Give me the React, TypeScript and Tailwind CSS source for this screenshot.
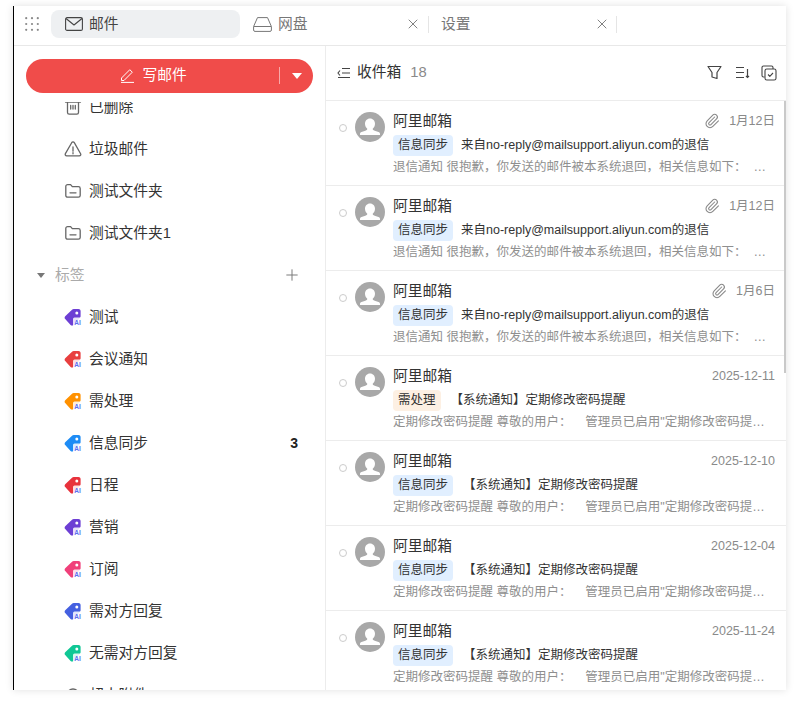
import React from "react";
import { X, Plus, Paperclip } from "lucide-react";

const font = { fontFamily: '"Liberation Sans","Noto Sans CJK SC",sans-serif' };

function TagIcon({ color }: { color: string }) {
  return (
    <svg width="18" height="18" viewBox="0 0 18 18" className="shrink-0">
      <path d="M1.2 8.2 8.3 1.6c.4-.4.9-.6 1.4-.6h4.8c1.2 0 2.1.9 2.1 2.1v5.2c0 .5-.2 1-.6 1.4l-6.6 7.2c-.8.8-2 .8-2.8 0L1.2 11c-.8-.8-.8-2 0-2.8Z" fill={color} />
      <circle cx="12.8" cy="5" r="1.5" fill="#fff" />
      <rect x="9" y="9.5" width="9" height="8.5" rx="1.5" fill="#fff" fillOpacity="0.85" />
      <text x="13.5" y="16.5" textAnchor="middle" fontSize="6.5" fontWeight="700" fill="#5b6ff0" fontFamily="Liberation Sans">AI</text>
    </svg>
  );
}

function FolderIcon() {
  return (
    <svg width="18" height="18" viewBox="0 0 18 18" fill="none" stroke="#666" strokeWidth="1.3" strokeLinejoin="round" strokeLinecap="round" className="shrink-0">
      <path d="M1.8 4.4c0-1 .8-1.8 1.8-1.8h3l1.700 2h6.100c1 0 1.800.8 1.800 1.800v7c0 1-.8 1.800-1.800 1.800H3.600c-1 0-1.800-.8-1.800-1.800v-9Z" />
      <path d="M6 10.800h6" />
    </svg>
  );
}

function WarnIcon() {
  return (
    <svg width="18" height="18" viewBox="0 0 18 18" fill="none" stroke="#666" strokeWidth="1.3" strokeLinejoin="round" className="shrink-0">
      <path d="M7.700 2.700c.6-1 2-1 2.600 0l6.300 11c.6 1-.1 2.200-1.300 2.200H2.700c-1.200 0-1.900-1.200-1.300-2.200l6.300-11Z" />
      <path d="M9 6.800v4.400M9 12.600v1.200" strokeLinecap="round" />
    </svg>
  );
}

function TrashIcon() {
  return (
    <svg width="18" height="18" viewBox="0 0 18 18" fill="none" stroke="#666" strokeWidth="1.3" strokeLinecap="round" className="shrink-0">
      <path d="M3.500 4v10.500c0 1 .7 1.700 1.700 1.700h7.600c1 0 1.700-.7 1.700-1.700V4M1.500 4h15M6.700 7.500V11M9 7.500V11M11.300 7.500V11M6.500 4V2h5v2" />
    </svg>
  );
}

function ClipLargeIcon() {
  return (
    <svg width="18" height="18" viewBox="0 0 18 18" fill="none" stroke="#666" strokeWidth="1.3" className="shrink-0">
      <path d="M3 9a6 6 0 0 1 12 0v7" />
    </svg>
  );
}

function Item({ icon, label, badge }: { icon: React.ReactNode; label: string; badge?: string }) {
  return (
    <div className="h-[42px] flex items-center pl-[50px] pr-[27px] shrink-0">
      <span className="w-[18px] h-[18px] flex items-center justify-center">{icon}</span>
      <span className="ml-[7px] text-[14.75px] text-[#333] flex-1">{label}</span>
      {badge && <span className="text-[14px] font-bold text-[#222]">{badge}</span>}
    </div>
  );
}

const tags: [string, string, string?][] = [
  ["测试", "#6d3fd4"],
  ["会议通知", "#e83f3f"],
  ["需处理", "#ff9100"],
  ["信息同步", "#1e8cf5", "3"],
  ["日程", "#e8323c"],
  ["营销", "#6d3fd4"],
  ["订阅", "#f0407a"],
  ["需对方回复", "#4560e0"],
  ["无需对方回复", "#10c795"],
];

type Mail = { tag: string; subject: string; date: string; clip?: boolean; kind: "a" | "b" };
const mails: Mail[] = [
  { tag: "信息同步", subject: "来自no-reply@mailsupport.aliyun.com的退信", date: "1月12日", clip: true, kind: "a" },
  { tag: "信息同步", subject: "来自no-reply@mailsupport.aliyun.com的退信", date: "1月12日", clip: true, kind: "a" },
  { tag: "信息同步", subject: "来自no-reply@mailsupport.aliyun.com的退信", date: "1月6日", clip: true, kind: "a" },
  { tag: "需处理", subject: "【系统通知】定期修改密码提醒", date: "2025-12-11", kind: "b" },
  { tag: "信息同步", subject: "【系统通知】定期修改密码提醒", date: "2025-12-10", kind: "b" },
  { tag: "信息同步", subject: "【系统通知】定期修改密码提醒", date: "2025-12-04", kind: "b" },
  { tag: "信息同步", subject: "【系统通知】定期修改密码提醒", date: "2025-11-24", kind: "b" },
];

function Avatar() {
  return (
    <svg width="30" height="30" viewBox="0 0 30 30" className="shrink-0">
      <circle cx="15" cy="15" r="15" fill="#a8a8a8" />
      <path d="M15 6.500c3 0 5 2.300 5 5.200 0 2.200-1 4-2.300 5 0 1 .6 1.500 2 2l3.800 1.400c.9.3 1.500 1 1.500 2V23H5v-1c0-.9.6-1.600 1.500-1.900l3.800-1.400c1.400-.5 2-1 2-2-1.300-1-2.300-2.800-2.300-5 0-2.900 2-5.200 5-5.200Z" fill="#fff" />
    </svg>
  );
}

function Row({ m }: { m: Mail }) {
  const isProc = m.tag === "需处理";
  return (
    <div className="h-[85px] shrink-0 border-b border-[#ececec] flex pl-[13px] pr-[11px]">
      <span className="mt-[23px] w-[8px] h-[8px] rounded-full border border-[#ccc] shrink-0" />
      <div className="ml-[8px] mt-[11px]"><Avatar /></div>
      <div className="ml-[8px] flex-1 min-w-0">
        <div className="h-[20px] mt-[10px] flex items-center">
          <span className="text-[14.75px] text-[#333] flex-1">阿里邮箱</span>
          {m.clip && <Paperclip size={16} strokeWidth={1.6} className="text-[#888] mr-[9px]" />}
          <span className="text-[12.5px] text-[#8a8a8a]">{m.date}</span>
        </div>
        <div className="h-[21px] mt-[4px] flex items-center">
          <span className={`h-[21px] px-[5px] rounded-[4px] text-[12.5px] text-[#333] flex items-center ${isProc ? "bg-[#fdf0e3]" : "bg-[#e1efff]"}`}>{m.tag}</span>
          <span className={`text-[12.5px] text-[#333] whitespace-nowrap ${m.kind === "a" ? "ml-[8px]" : "ml-[10px]"}`}>{m.subject}</span>
        </div>
        <div className="mt-[2px] mr-[8px] text-[12.5px] leading-[18px] text-[#8f8f8f] overflow-hidden flex">
          {m.kind === "a" ? (
            <span className="whitespace-pre truncate">{"退信通知 很抱歉，你发送的邮件被本系统退回，相关信息如下：  …"}</span>
          ) : (
            <span className="whitespace-pre truncate">{"定期修改密码提醒 尊敬的用户：    管理员已启用\"定期修改密码提醒\"功能，请及时修改"}</span>
          )}
        </div>
      </div>
    </div>
  );
}

export default function App() {
  return (
    <div className="w-[803px] h-[709px] bg-white pt-[6px] pl-[13px] overflow-hidden" style={font}>
      <div className="w-[773px] h-[684px] border-l border-black bg-white flex flex-col shadow-[0_0_8px_rgba(0,0,0,0.12)] overflow-hidden">
        <div className="h-[40px] shrink-0 border-b border-[#e8e8e8] flex items-center pb-[3px]">
          <svg width="14" height="14" viewBox="0 0 14 14" fill="#888" className="ml-[11px] shrink-0">
            {[1.2, 7, 12.8].flatMap((y) => [1.2, 7, 12.8].map((x) => <circle key={`${x}-${y}`} cx={x} cy={y} r="1.1" />))}
          </svg>
          <div className="ml-[12px] w-[189px] h-[28px] rounded-lg bg-[#eef0f2] flex items-center pl-[14px] shrink-0">
            <svg width="18" height="14" viewBox="0 0 18 14" fill="none" stroke="#444" strokeWidth="1.1" strokeLinejoin="round">
              <rect x="0.6" y="0.6" width="16.8" height="12.8" rx="1.5" />
              <path d="m1 1.500 8 6.500 8-6.500" />
            </svg>
            <span className="ml-[6px] text-[14.75px] text-[#444]">邮件</span>
          </div>
          <div className="w-[189px] h-[17px] border-r border-[#e5e5e5] flex items-center pl-[13px] pr-[7px] shrink-0">
            <svg width="19" height="15" viewBox="0 0 19 15" fill="none" stroke="#777" strokeWidth="1" strokeLinejoin="round">
              <path d="M4.500 0.600h10L18.400 9.500V13a1.400 1.400 0 0 1-1.400 1.400H2A1.400 1.400 0 0 1 0.600 13V9.500L4.500 0.600Z" />
              <path d="M0.800 9.500h17.400" />
            </svg>
            <span className="ml-[6px] text-[14.75px] text-[#777] flex-1">网盘</span>
            <X size={16} strokeWidth={1.4} className="text-[#777]" />
          </div>
          <div className="w-[188px] h-[17px] border-r border-[#e5e5e5] flex items-center pl-[12px] pr-[6px] shrink-0">
            <span className="text-[14.75px] text-[#777] flex-1">设置</span>
            <X size={16} strokeWidth={1.4} className="text-[#777]" />
          </div>
        </div>
        <div className="flex-1 flex min-h-0">
          <aside className="w-[312px] shrink-0 border-r border-[#ececec] flex flex-col overflow-hidden">
            <div className="h-[56px] shrink-0 pt-[13px] pl-[12px]">
              <div className="w-[287px] h-[34px] rounded-full bg-[#f04c4a] flex items-center text-white pb-[1px]">
                <div className="flex-1 flex items-center justify-center pl-[2px]">
                  <svg width="15" height="15" viewBox="0 0 15 15" fill="none" stroke="#fff" strokeWidth="1" strokeLinejoin="round">
                    <path d="M1.500 10 9.800 1.700l2.500 2.500L4 12.500H1.500V10Z" />
                    <path d="M1 14.400h13" />
                  </svg>
                  <span className="ml-[7px] text-[14.75px]">写邮件</span>
                </div>
                <span className="w-px h-[17px] bg-[#f8a9a8]" />
                <span className="w-[33px] flex justify-center">
                  <span className="w-0 h-0 border-l-[5px] border-r-[5px] border-t-[6px] border-l-transparent border-r-transparent border-t-white" />
                </span>
              </div>
            </div>
            <div className="flex-1 min-h-0 overflow-hidden">
              <div className="-mt-[16px] flex flex-col">
                <Item icon={<TrashIcon />} label="已删除" />
                <Item icon={<WarnIcon />} label="垃圾邮件" />
                <Item icon={<FolderIcon />} label="测试文件夹" />
                <Item icon={<FolderIcon />} label="测试文件夹1" />
                <div className="h-[42px] flex items-center pl-[23px] pr-[24px] shrink-0">
                  <span className="w-0 h-0 border-l-[4px] border-r-[4px] border-t-[5px] border-l-transparent border-r-transparent border-t-[#777]" />
                  <span className="ml-[10px] text-[14.75px] text-[#aaa] flex-1">标签</span>
                  <Plus size={18} strokeWidth={1.3} className="text-[#777]" />
                </div>
                {tags.map(([l, c, b]) => (
                  <Item key={l} icon={<TagIcon color={c} />} label={l} badge={b} />
                ))}
                <Item icon={<ClipLargeIcon />} label="超大附件" />
              </div>
            </div>
          </aside>
          <main className="flex-1 min-w-0 flex flex-col relative">
            <div className="h-[55px] shrink-0 border-b border-[#ececec] flex items-center pl-[11px] pr-[9px] pb-[1px]">
              <svg width="13" height="12" viewBox="0 0 13 12" fill="none" stroke="#444" strokeWidth="1.1">
                <path d="M5 1.500h8M5 6h8M1 10.500h12M3 3.500 1 6l2 2.500" />
              </svg>
              <span className="ml-[7px] text-[14.75px] text-[#333]">收件箱</span>
              <span className="ml-[9px] text-[14.75px] text-[#8a8a8a] flex-1">18</span>
              <svg width="15" height="15" viewBox="0 0 15 15" fill="none" stroke="#444" strokeWidth="1.2" strokeLinejoin="round">
                <path d="M1 1.500h13L10 7.500V13.500l-5-1.500V7.500L1 1.500Z" />
              </svg>
              <svg width="15" height="15" viewBox="0 0 15 15" fill="none" stroke="#444" strokeWidth="1.2" className="ml-[13px]">
                <path d="M1 2.500h8M1 7.500h8M1 12.500h8M12.500 4v8.500M11 11l1.500 1.500L14 11" />
              </svg>
              <svg width="16" height="16" viewBox="0 0 16 16" fill="none" stroke="#444" strokeWidth="1.1" strokeLinejoin="round" className="ml-[11px]">
                <path d="M3.500 12H2.500A1.500 1.500 0 0 1 1 10.500v-8A1.500 1.500 0 0 1 2.500 1h8A1.500 1.500 0 0 1 12 2.500V4" />
                <rect x="4" y="4" width="11" height="11" rx="1.8" />
                <path d="m7 9.500 1.800 1.800L12 8" />
              </svg>
            </div>
            <div className="flex-1 min-h-0 overflow-hidden flex flex-col">
              {mails.map((m, i) => <Row key={i} m={m} />)}
            </div>
            <span className="absolute right-0 top-[55px] w-[2px] h-[272px] bg-[#c9c9c9]" />
          </main>
        </div>
      </div>
    </div>
  );
}
